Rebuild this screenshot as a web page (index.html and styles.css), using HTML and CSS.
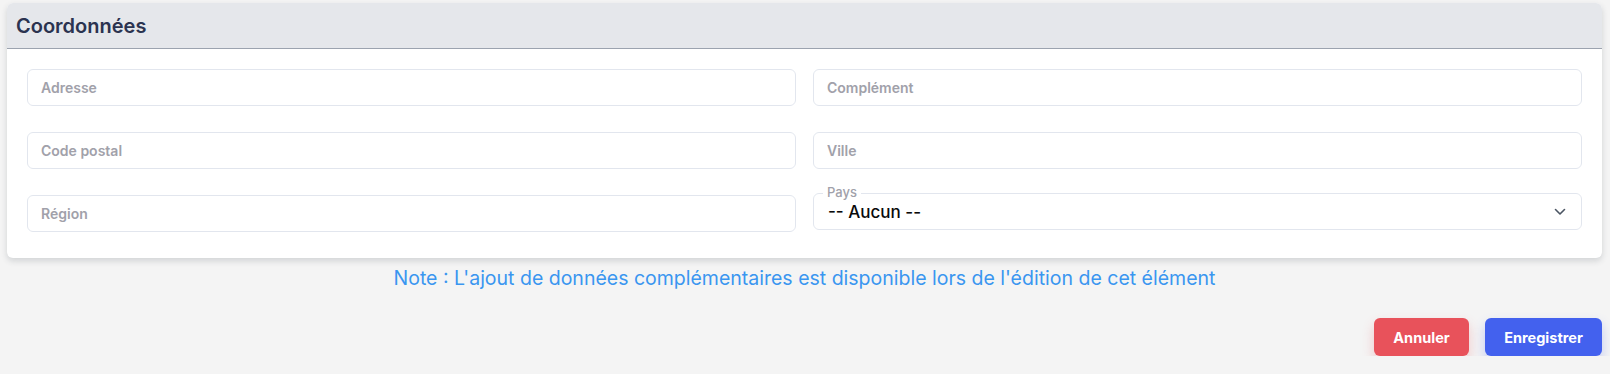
FILE: index.html
```html
<!DOCTYPE html>
<html lang="fr">
<head>
    <meta charset="UTF-8">
    <meta name="viewport" content="width=device-width, initial-scale=1.0">
    <title>Coordonnées</title>
    <link rel="stylesheet" href="styles.css">
</head>
<body>
    <div class="page">
        <!-- Coordonnées card -->
        <section class="card">
            <header class="card-header">
                <h2 class="card-title">Coordonnées</h2>
            </header>
            <div class="card-body">
                <input class="field" type="text" placeholder="Adresse">
                <input class="field" type="text" placeholder="Complément">
                <input class="field" type="text" placeholder="Code postal">
                <input class="field" type="text" placeholder="Ville">
                <input class="field" type="text" placeholder="Région">
                <div class="select-wrap">
                    <span class="float-label">Pays</span>
                    <div class="select">
                        <span class="select-value">-- Aucun --</span>
                        <svg class="chevron" width="12" height="8" viewBox="0 0 12 8" fill="none">
                            <path d="M1.5 1.5L6 6L10.5 1.5" stroke="#4b5563" stroke-width="1.6" stroke-linecap="round" stroke-linejoin="round"/>
                        </svg>
                    </div>
                </div>
            </div>
        </section>

        <p class="note">Note : L'ajout de données complémentaires est disponible lors de l'édition de cet élément</p>

        <div class="actions">
            <button class="btn btn-cancel">Annuler</button>
            <button class="btn btn-save">Enregistrer</button>
        </div>
    </div>
</body>
</html>
```

FILE: styles.css
```css
* {
    margin: 0;
    padding: 0;
    box-sizing: border-box;
}

body {
    font-family: Inter, 'Noto Sans', sans-serif;
    background-color: #f4f4f4;
    color: #111827;
}

.page {
    padding: 3px 8px 0 7px;
}

/* Card */
.card {
    background: white;
    border-radius: 6px;
    box-shadow: 0 3px 6px rgba(30, 41, 59, 0.16);
    overflow: hidden;
}

.card-header {
    height: 46px;
    background-color: #e5e7eb;
    border-bottom: 1px solid #9ca3af;
    padding: 0 9px;
    display: flex;
    align-items: center;
}

.card-title {
    font-size: 20px;
    font-weight: 600;
    color: #2b3350;
}

.card-body {
    display: grid;
    grid-template-columns: 1fr 1fr;
    column-gap: 17px;
    row-gap: 26px;
    padding: 20px 20px 26px;
}

.field {
    height: 37px;
    border: 1px solid #e2e6ee;
    border-radius: 6px;
    padding: 0 13px;
    font-family: inherit;
    font-size: 14px;
    font-weight: 600;
    color: #111827;
    outline: none;
}

.field::placeholder {
    color: #a1a1aa;
}

/* Pays select */
.select-wrap {
    position: relative;
    align-self: start;
    margin-top: -2px;
}

.float-label {
    position: absolute;
    top: -9px;
    left: 10px;
    padding: 0 4px;
    background: white;
    font-size: 13px;
    font-weight: 500;
    color: #a1a1aa;
    line-height: 16px;
}

.select {
    height: 37px;
    border: 1px solid #e2e6ee;
    border-radius: 6px;
    padding: 0 15px 0 14px;
    display: flex;
    align-items: center;
    justify-content: space-between;
}

.select-value {
    font-size: 17px;
    font-weight: 500;
    color: #0a0a0a;
}

/* Note */
.note {
    text-align: center;
    color: #3a96f0;
    font-size: 19.5px;
    margin-top: 7px;
    line-height: 26px;
}

/* Buttons */
.actions {
    display: flex;
    justify-content: flex-end;
    gap: 16px;
    margin-top: 27px;
}

.btn {
    height: 38px;
    border: none;
    border-radius: 6px;
    font-family: inherit;
    font-size: 14.5px;
    font-weight: 700;
    color: white;
    cursor: pointer;
}

.btn-cancel {
    width: 95px;
    background: #e8525b;
    box-shadow: 0 6px 12px rgba(232, 82, 91, 0.28);
}

.btn-save {
    width: 117px;
    background: #4361ee;
    box-shadow: 0 6px 12px rgba(67, 97, 238, 0.28);
}
```
